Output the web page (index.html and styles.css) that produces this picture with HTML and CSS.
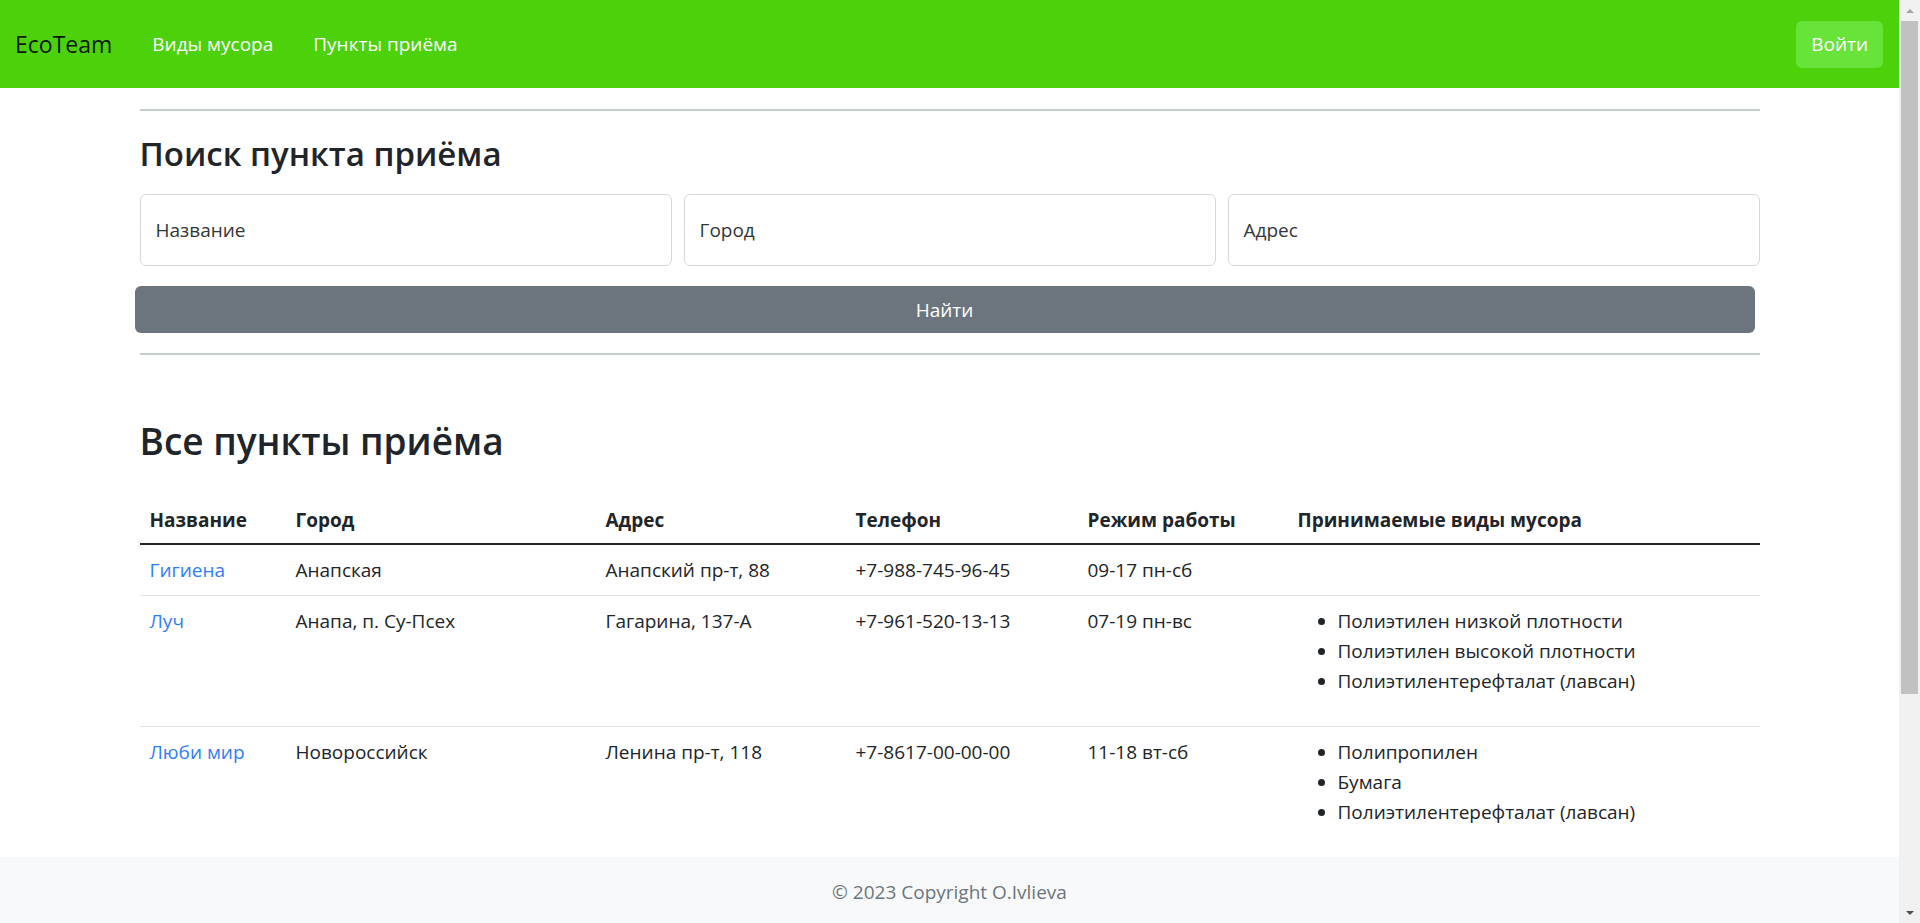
FILE: index.html
```html
<!DOCTYPE html>
<html lang="ru">
<head>
<meta charset="utf-8">
<title>EcoTeam — Пункты приёма</title>
<link rel="stylesheet" href="styles.css">
</head>
<body>
<div class="page">
  <nav class="navbar">
    <a class="brand" href="#">EcoTeam</a>
    <ul class="nav-links">
      <li><a class="nav-link" href="#">Виды мусора</a></li>
      <li><a class="nav-link" href="#">Пункты приёма</a></li>
    </ul>
    <button class="login-btn" type="button">Войти</button>
  </nav>

  <main class="container">
    <hr class="divider">
    <section class="search">
      <h2 class="search-title">Поиск пункта приёма</h2>
      <form class="search-form">
        <div class="fields">
          <div class="float-field">
            <input class="field-input" id="f-name" type="text">
            <label class="field-label" for="f-name">Название</label>
          </div>
          <div class="float-field">
            <input class="field-input" id="f-city" type="text">
            <label class="field-label" for="f-city">Город</label>
          </div>
          <div class="float-field">
            <input class="field-input" id="f-addr" type="text">
            <label class="field-label" for="f-addr">Адрес</label>
          </div>
        </div>
        <button class="search-btn" type="submit">Найти</button>
      </form>
    </section>
    <hr class="divider divider-bottom">

    <section class="points">
      <h1 class="points-title">Все пункты приёма</h1>
      <table class="points-table">
        <colgroup>
          <col class="c-name"><col class="c-city"><col class="c-addr"><col class="c-phone"><col class="c-hours"><col class="c-types">
        </colgroup>
        <thead>
          <tr>
            <th>Название</th>
            <th>Город</th>
            <th>Адрес</th>
            <th>Телефон</th>
            <th>Режим работы</th>
            <th>Принимаемые виды мусора</th>
          </tr>
        </thead>
        <tbody>
          <tr>
            <td><a href="#" class="point-link">Гигиена</a></td>
            <td>Анапская</td>
            <td>Анапский пр-т, 88</td>
            <td>+7-988-745-96-45</td>
            <td>09-17 пн-сб</td>
            <td></td>
          </tr>
          <tr>
            <td><a href="#" class="point-link">Луч</a></td>
            <td>Анапа, п. Су-Псех</td>
            <td>Гагарина, 137-А</td>
            <td>+7-961-520-13-13</td>
            <td>07-19 пн-вс</td>
            <td>
              <ul class="types">
                <li>Полиэтилен низкой плотности</li>
                <li>Полиэтилен высокой плотности</li>
                <li>Полиэтилентерефталат (лавсан)</li>
              </ul>
            </td>
          </tr>
          <tr>
            <td><a href="#" class="point-link">Люби мир</a></td>
            <td>Новороссийск</td>
            <td>Ленина пр-т, 118</td>
            <td>+7-8617-00-00-00</td>
            <td>11-18 вт-сб</td>
            <td>
              <ul class="types">
                <li>Полипропилен</li>
                <li>Бумага</li>
                <li>Полиэтилентерефталат (лавсан)</li>
              </ul>
            </td>
          </tr>
        </tbody>
      </table>
    </section>
  </main>

  <footer class="footer">
    <p class="copyright">© 2023 Copyright O.Ivlieva</p>
  </footer>
</div>

<div class="scrollbar" aria-hidden="true">
  <span class="sb-button"><span class="sb-arrow sb-arrow-up"></span></span>
  <span class="sb-thumb"></span>
  <span class="sb-rest"></span>
  <span class="sb-button"><span class="sb-arrow sb-arrow-down"></span></span>
</div>
</body>
</html>
```

FILE: styles.css
```css
* { box-sizing: border-box; }

html, body {
  margin: 0;
  padding: 0;
}

body {
  font-family: "Open Sans", "Noto Sans", "DejaVu Sans", sans-serif;
  font-size: 19px;
  line-height: 30px;
  color: #212529;
  background: #ffffff;
  display: grid;
  grid-template-columns: 1fr 21px;
  align-items: start;
}

.page {
  min-width: 0;
}

/* Fake window scrollbar (browser chrome in the reference) */
.scrollbar {
  position: sticky;
  top: 0;
  height: 923px;
  background: #f1f1f1;
  display: flex;
  flex-direction: column;
}

.sb-button {
  height: 21px;
  display: flex;
  align-items: center;
  justify-content: center;
  flex: none;
}

.sb-arrow {
  width: 0;
  height: 0;
  border-left: 4px solid transparent;
  border-right: 4px solid transparent;
}

.sb-arrow-up {
  border-bottom: 4px solid #a3a3a3;
}

.sb-arrow-down {
  border-top: 4px solid #505050;
}

.sb-thumb {
  height: 673px;
  margin: 0 2px;
  background: #c1c1c1;
  flex: none;
}

.sb-rest {
  flex: 1;
}

/* Navbar */
.navbar {
  height: 88px;
  background: #4cd10a;
  display: flex;
  align-items: center;
  padding: 0 16px 0 15px;
}

.brand {
  font-size: 23px;
  line-height: 36px;
  color: rgba(0, 0, 0, 0.9);
  text-decoration: none;
  margin-right: 20px;
}

.nav-links {
  list-style: none;
  margin: 0;
  padding: 0;
  display: flex;
  flex: 1;
}

.nav-link {
  display: block;
  padding: 10px 20px;
  color: #ffffff;
  text-decoration: none;
}

.login-btn {
  font-family: inherit;
  font-size: 19px;
  line-height: 30px;
  height: 47px;
  padding: 0 15px;
  border: 0;
  border-radius: 6px;
  background: #68e33a;
  color: #ffffff;
}

/* Main container */
.container {
  width: 1620px;
  margin: 0 auto;
}

.divider {
  margin: 21px 0 0;
  border: 0;
  height: 2px;
  background: #c0d0cf;
}

.divider-bottom {
  margin-top: 20px;
}

.search-title {
  font-size: 33px;
  line-height: 40px;
  font-weight: 600;
  margin: 23px 0 20px;
}

.fields {
  display: grid;
  grid-template-columns: repeat(3, 1fr);
  gap: 12px;
}

.float-field {
  position: relative;
}

.field-input {
  display: block;
  width: 100%;
  height: 72px;
  border: 1px solid #d5d9dd;
  border-radius: 6px;
  background: #ffffff;
  padding: 0 16px;
  font-family: inherit;
  font-size: 19px;
}

.field-label {
  position: absolute;
  top: 0;
  left: 0;
  height: 100%;
  display: flex;
  align-items: center;
  padding: 0 16px;
  color: #32373c;
  pointer-events: none;
}

.search-btn {
  display: block;
  width: 1620px;
  margin: 20px 0 0 -5px;
  height: 47px;
  border: 0;
  border-radius: 6px;
  background: #6c757d;
  color: #ffffff;
  font-family: inherit;
  font-size: 19px;
}

/* Points table */
.points-title {
  font-size: 37px;
  line-height: 48px;
  font-weight: 600;
  margin: 62px 0 30px;
}

.points-table {
  width: 100%;
  table-layout: fixed;
  border-collapse: collapse;
}

.c-name { width: 146px; }
.c-city { width: 310px; }
.c-addr { width: 250px; }
.c-phone { width: 232px; }
.c-hours { width: 210px; }

.points-table th {
  text-align: left;
  font-weight: 700;
  padding: 10px 10px 8px;
  border-bottom: 2px solid #212529;
}

.points-table td {
  vertical-align: top;
  padding: 10px;
  border-bottom: 1px solid #dee2e6;
}

.points-table tbody tr:last-child td {
  border-bottom: 0;
}

.point-link {
  color: #2f7dfd;
  text-decoration: none;
}

.types {
  margin: 0 0 20px;
  padding-left: 40px;
}

/* Footer */
.footer {
  background: #f8f9fa;
  padding: 20px 0 17px;
  text-align: center;
}

.copyright {
  margin: 0;
  color: #6c757d;
}
```
